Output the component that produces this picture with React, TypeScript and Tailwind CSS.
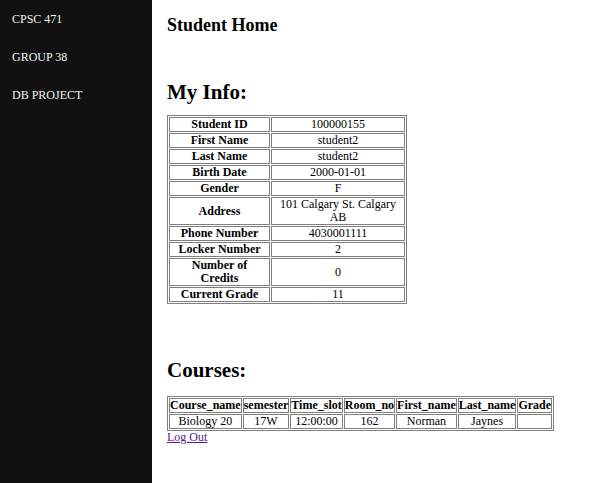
import React from "react"

const info: [string, React.ReactNode][] = [
  ["Student ID", "100000155"],
  ["First Name", "student2"],
  ["Last Name", "student2"],
  ["Birth Date", "2000-01-01"],
  ["Gender", "F"],
  ["Address", "101 Calgary St. Calgary AB"],
  ["Phone Number", "4030001111"],
  ["Locker Number", "2"],
  ["Number of Credits", "0"],
  ["Current Grade", "11"],
]

const courseCols = ["Course_name", "semester", "Time_slot", "Room_no", "First_name", "Last_name", "Grade"]
const courseRow = ["Biology 20", "17W", "12:00:00", "162", "Norman", "Jaynes", ""]

const cell = "border border-[#808080] px-0 py-0 text-center align-middle"

export default function App() {
  return (
    <div className="flex min-h-[483px] font-['Liberation_Serif',serif] text-black text-[12px] leading-[13px]">
      <nav className="w-[152px] shrink-0 bg-[#111111] text-[#f1f1f1] pt-[13px] pl-[12px]">
        <div className="h-[38px]">CPSC 471</div>
        <div className="h-[38px]">GROUP 38</div>
        <div className="h-[38px]">DB PROJECT</div>
      </nav>

      <main className="flex-1 pl-[15px] bg-white">
        <h1 className="text-[18px] leading-[21px] font-bold mt-[15px]">Student Home</h1>

        <h2 className="text-[21px] leading-[24px] font-bold mt-[44px] mb-[11px]">My Info:</h2>
        <table className="w-[240px] table-fixed border-separate border-spacing-[1px] border border-[#808080]">
          <colgroup>
            <col className="w-[101px]" />
            <col />
          </colgroup>
          <tbody>
            {info.map(([k, v]) => (
              <tr key={k}>
                <th className={cell + " font-bold"}>
                  {k === "Number of Credits" ? (
                    <>
                      Number of
                      <br />
                      Credits
                    </>
                  ) : (
                    k
                  )}
                </th>
                <td className={cell + " px-[6px]"}>{v}</td>
              </tr>
            ))}
          </tbody>
        </table>

        <h2 className="text-[21px] leading-[24px] font-bold mt-[54px] mb-[14px]">Courses:</h2>
        <table className="border-separate border-spacing-[1px] border border-[#808080]">
          <thead>
            <tr>
              {courseCols.map((c) => (
                <th key={c} className={cell + " font-bold"}>{c}</th>
              ))}
            </tr>
          </thead>
          <tbody>
            <tr>
              {courseRow.map((c, i) => (
                <td key={i} className={cell}>{c}</td>
              ))}
            </tr>
          </tbody>
        </table>
        <a href="#" className="text-[#551a8b] underline">Log Out</a>
      </main>
    </div>
  )
}
